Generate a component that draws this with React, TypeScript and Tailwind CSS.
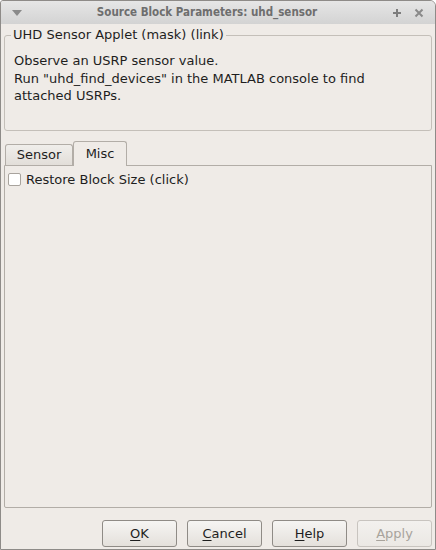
import React from "react";

const font = { fontFamily: '"DejaVu Sans", sans-serif' };

function Btn({ label, u, disabled }: { label: string; u: string; disabled?: boolean }) {
  const rest = label.slice(1);
  return (
    <button
      className={`w-[75px] h-[27px] rounded-[3px] border text-[13px] flex items-center justify-center ${
        disabled
          ? "border-[#c8c4bf] bg-gradient-to-b from-[#f3f1ee] to-[#ebe8e4] text-[#a8a39c]"
          : "border-[#8f8b86] bg-gradient-to-b from-[#f6f5f3] to-[#e4e0db] text-[#1e1e1e]"
      }`}
    >
      <span className="underline underline-offset-2">{u}</span>
      {rest}
    </button>
  );
}

export default function App() {
  return (
    <div className="w-[436px] h-[550px] bg-[#efebe7] border border-[#8e8b88] rounded-tr-[6px] rounded-tl-[3px] flex flex-col overflow-hidden text-[#1e1e1e]" style={font}>
      <div className="h-[23px] shrink-0 bg-gradient-to-b from-[#e6e6e6] to-[#d3d3d3] flex items-center px-2 relative">
        <svg width="10" height="6" viewBox="0 0 10 6" className="ml-[3px]">
          <path d="M0 0 L10 0 L5 6 Z" fill="#8a8a8a" />
        </svg>
        <div
          className="flex-1 text-center text-[11.5px] font-bold text-[#6e6e6e]"
          style={{ fontFamily: '"DejaVu Sans Condensed", "DejaVu Sans", sans-serif', fontStretch: "condensed" }}
        >
          Source Block Parameters: uhd_sensor
        </div>
        <div className="flex items-center gap-[12px] mr-[3px]">
          <svg width="10" height="10" viewBox="0 0 10 10">
            <path d="M5 1 V9 M1 5 H9" stroke="#7d7d7d" strokeWidth="2" />
          </svg>
          <svg width="10" height="10" viewBox="0 0 10 10">
            <path d="M1.5 1.5 L8.5 8.5 M8.5 1.5 L1.5 8.5" stroke="#8a8a8a" strokeWidth="2" />
          </svg>
        </div>
      </div>
      <div className="flex-1 flex flex-col px-[3px] pt-[2px] pb-[2px]">
        <div className="relative mt-[9px] h-[96px] border border-[#c4bfb9] rounded-[3px] px-[9px] pt-[16px] text-[13px] leading-[17.5px] shrink-0">
          <div className="absolute -top-[10px] left-[6px] px-[2px] bg-[#efebe7] leading-[18px]">UHD Sensor Applet (mask) (link)</div>
          <div>Observe an USRP sensor value.</div>
          <div>Run "uhd_find_devices" in the MATLAB console to find</div>
          <div>attached USRPs.</div>
        </div>
        <div className="mt-[10px] flex items-end pl-[1px] h-[24px] shrink-0 relative z-10">
          <div className="h-[21px] w-[68px] border border-[#b2ada7] rounded-t-[3px] bg-gradient-to-b from-[#f0eeeb] to-[#e2ded9] flex items-center justify-center text-[13px] border-b-0">Sensor</div>
          <div className="h-[25px] w-[54px] -mb-[1px] border border-[#b2ada7] border-b-0 rounded-t-[3px] bg-[#efebe7] flex items-center justify-center text-[13px]">Misc</div>
        </div>
        <div className="flex-1 border border-[#b2ada7] rounded-b-[2px] px-[3px] pt-[4px]">
          <div className="flex items-center gap-[5px] text-[13px]">
            <div className="w-[13px] h-[13px] border border-[#a8a39d] bg-white rounded-[2px]" />
            <span>Restore Block Size (click)</span>
          </div>
        </div>
        <div className="shrink-0 flex items-center justify-end gap-[10px] pt-[12px]">
          <Btn label="OK" u="O" />
          <Btn label="Cancel" u="C" />
          <Btn label="Help" u="H" />
          <Btn label="Apply" u="A" disabled />
        </div>
      </div>
    </div>
  );
}
